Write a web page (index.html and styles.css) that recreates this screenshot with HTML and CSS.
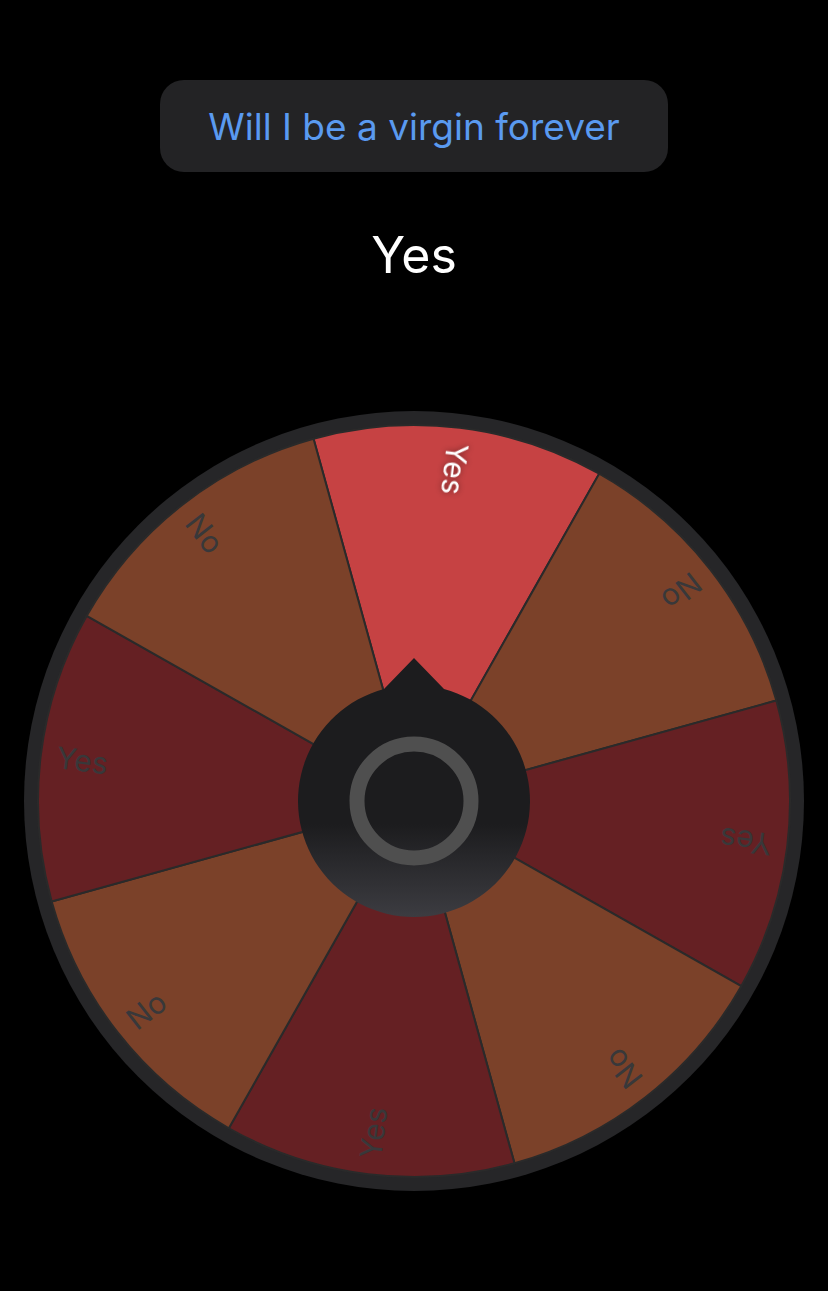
FILE: index.html
```html
<!DOCTYPE html>
<html lang="en">
<head>
  <meta charset="UTF-8" />
  <meta name="viewport" content="width=device-width, initial-scale=1.0" />
  <title>Decision Wheel</title>
  <link rel="stylesheet" href="styles.css">
</head>
<body>
  <main class="app">
    <button class="question">Will I be a virgin forever</button>
    <div class="result">Yes</div>

    <div class="wheel-wrap">
      <svg class="wheel" viewBox="-390 -390 780 780" width="780" height="780">
        <defs>
          <linearGradient id="hub-fill" gradientUnits="userSpaceOnUse" x1="0" y1="-116" x2="0" y2="116">
            <stop offset="0.6" stop-color="#1c1c1e" />
            <stop offset="1" stop-color="#3c3c41" />
          </linearGradient>
        </defs>
        <circle class="rim" r="390" />
        <g id="segments"></g>
        <!-- hub with pointer -->
        <path class="hub" d="M -30 -112 L 0 -143 L 30 -112 A 116 116 0 1 1 -30 -112 Z" />
        <circle class="hub-ring" r="57" />
      </svg>
    </div>
  </main>

  <script>
    const options = ["Yes", "No", "Yes", "No", "Yes", "No", "Yes", "No"];
    const selected = 0;
    const offset = -15.5; // wheel rotation in degrees
    const radius = 376;

    function point(deg, r) {
      const a = deg * Math.PI / 180;
      return [(r * Math.sin(a)).toFixed(2), (-r * Math.cos(a)).toFixed(2)];
    }

    const ns = "http://www.w3.org/2000/svg";
    const group = document.getElementById("segments");
    const step = 360 / options.length;

    options.forEach((label, i) => {
      const start = offset + i * step;
      const end = start + step;
      const [x1, y1] = point(start, radius);
      const [x2, y2] = point(end, radius);

      const path = document.createElementNS(ns, "path");
      path.setAttribute("d", `M 0 0 L ${x1} ${y1} A ${radius} ${radius} 0 0 1 ${x2} ${y2} Z`);
      let cls = "segment " + (label === "Yes" ? "yes" : "no");
      if (i === selected) cls += " selected";
      path.setAttribute("class", cls);
      group.appendChild(path);

      const text = document.createElementNS(ns, "text");
      text.textContent = label;
      text.setAttribute("class", i === selected ? "label selected" : "label");
      text.setAttribute("transform", `rotate(${start + step / 2}) translate(0 -360) rotate(90)`);
      group.appendChild(text);
    });
  </script>
</body>
</html>
```

FILE: styles.css
```css
body {
  background: #000;
  margin: 0;
  padding: 0;
  font-family: Inter, "Noto Sans", sans-serif;
}
.app {
  display: flex;
  flex-direction: column;
  align-items: center;
}
.question {
  margin-top: 80px;
  width: 508px;
  height: 92px;
  border: none;
  border-radius: 24px;
  background: #232325;
  color: #5a9af0;
  font-family: Inter, "Noto Sans", sans-serif;
  font-size: 37px;
  cursor: pointer;
}
.result {
  margin-top: 53px;
  font-size: 50px;
  line-height: 60px;
  color: #fff;
}
.wheel-wrap {
  margin-top: 126px;
}
.wheel {
  display: block;
}
.rim {
  fill: #262628;
}
.segment {
  stroke: #2a2a2a;
  stroke-width: 2;
}
.segment.yes {
  fill: #652023;
}
.segment.no {
  fill: #7b4129;
}
.segment.selected {
  fill: #c64243;
}
.label {
  font-family: Inter, "Noto Sans", sans-serif;
  font-size: 30px;
  fill: #38383a;
  dominant-baseline: central;
}
.label.selected {
  fill: #fff;
  filter: drop-shadow(0 0 3px rgba(0, 0, 0, 0.45));
}
.hub {
  fill: url(#hub-fill);
}
.hub-ring {
  fill: none;
  stroke: #4f4f4f;
  stroke-width: 15;
}
```
